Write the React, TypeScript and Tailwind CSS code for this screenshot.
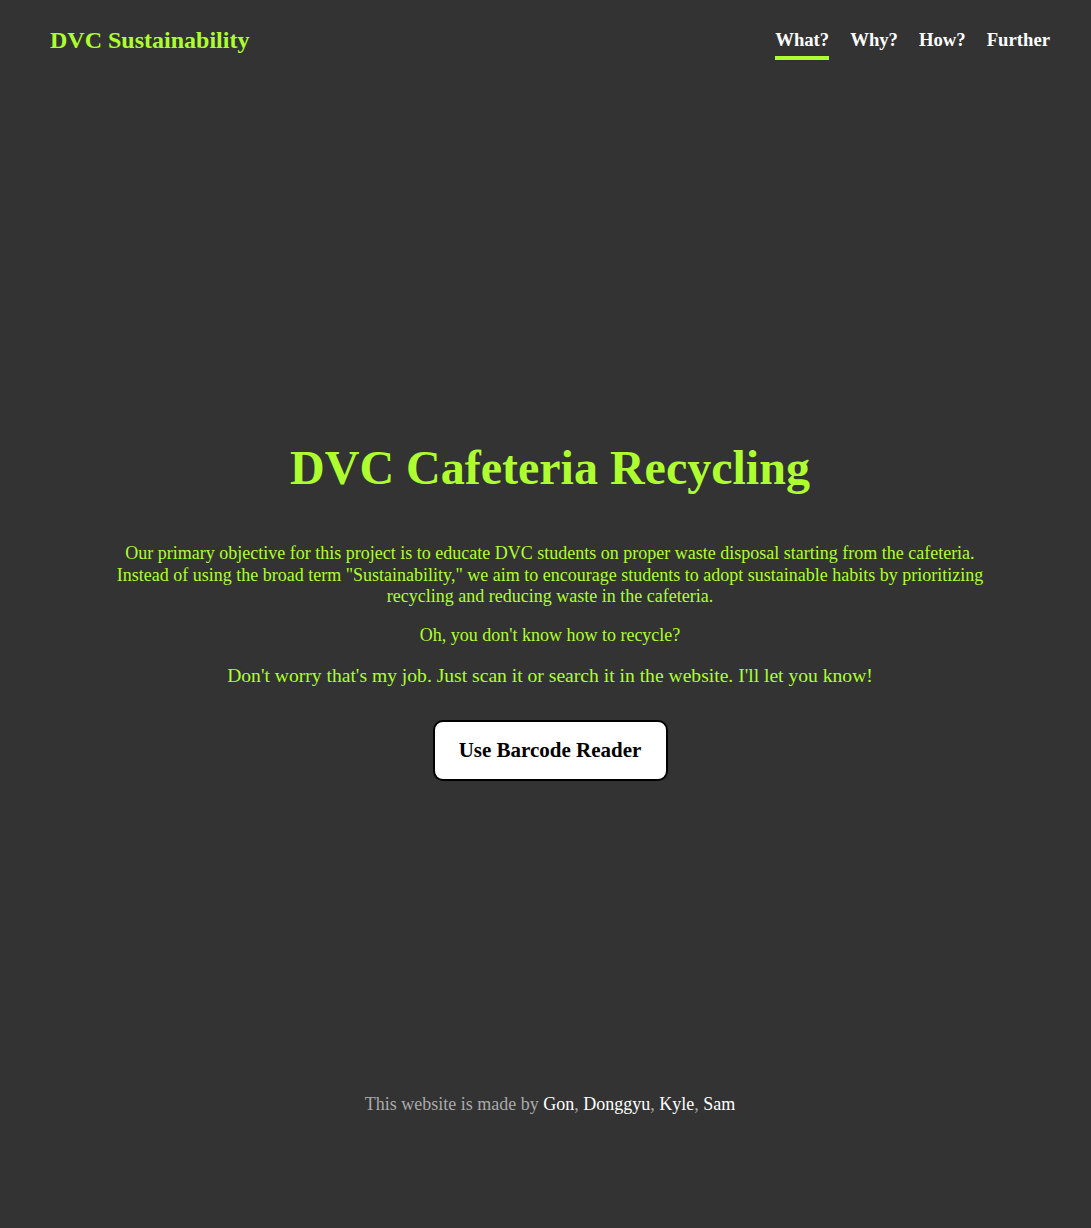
import React from "react";

export default function App() {
  const serif = { fontFamily: '"Liberation Serif", "Times New Roman", serif' };
  return (
    <div style={serif} className="min-h-[1228px] bg-[#333333] flex flex-col">
      <header className="h-[80px] pl-[50px] pr-[41px] flex items-center justify-between">
        <div className="text-[24px] font-bold text-[#adff2f]">DVC Sustainability</div>
        <nav className="flex gap-[21px] text-[18.7px] font-bold text-white">
          <a className="relative">
            What?
            <span className="absolute left-0 right-0 top-[30px] h-[4px] bg-[#adff2f]" />
          </a>
          <a>Why?</a>
          <a>How?</a>
          <a>Further</a>
        </nav>
      </header>
      <main className="flex flex-col items-center text-center pt-[360px] pl-[9px]">
        <h1 className="text-[48px] font-bold text-[#adff2f] leading-[56px]">DVC Cafeteria Recycling</h1>
        <p className="mt-[47px] text-[18px] text-[#adff2f] leading-[21.5px] whitespace-nowrap">
          Our primary objective for this project is to educate DVC students on proper waste disposal starting from the cafeteria.
          <br />
          Instead of using the broad term "Sustainability," we aim to encourage students to adopt sustainable habits by prioritizing
          <br />
          recycling and reducing waste in the cafeteria.
        </p>
        <p className="mt-[17px] text-[18px] text-[#adff2f] leading-[21.5px]">Oh, you don't know how to recycle?</p>
        <p className="mt-[18px] text-[19.6px] text-[#adff2f] leading-[23px]">
          Don't worry that's my job. Just scan it or search it in the website. I'll let you know!
        </p>
        <button className="mt-[33px] w-[235px] h-[61px] bg-white border-2 border-black rounded-[10px] text-[21px] font-bold text-black">
          Use Barcode Reader
        </button>
      </main>
      <footer className="mt-[310px] pl-[9px] text-center text-[18px] text-[#aaaaaa]">
        This website is made by <span className="text-white">Gon</span>, <span className="text-white">Donggyu</span>, <span className="text-white">Kyle</span>, <span className="text-white">Sam</span>
      </footer>
    </div>
  );
}
